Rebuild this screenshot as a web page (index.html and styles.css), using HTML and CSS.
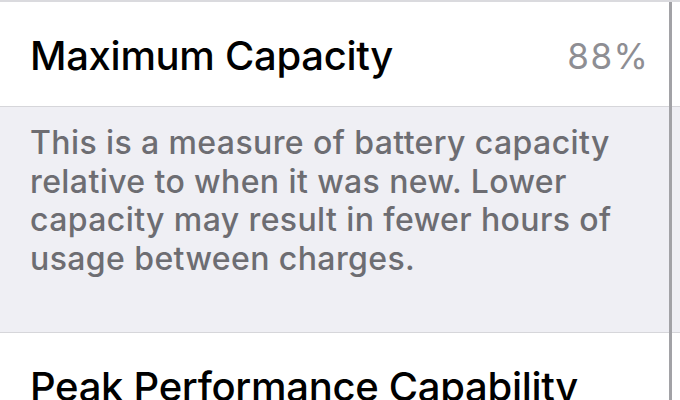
FILE: index.html
```html
<!DOCTYPE html>
<html lang="en">
<head>
    <meta charset="UTF-8" />
    <meta name="viewport" content="width=device-width, initial-scale=1.0"/>
    <title>Battery Health</title>
    <link rel="stylesheet" href="styles.css">
</head>
<body>
    <div class="screen">
        <div class="group">
            <div class="row">
                <span class="label">Maximum Capacity</span>
                <span class="value">88%</span>
            </div>
        </div>
        <p class="footnote">This is a measure of battery capacity relative to when it was new. Lower capacity may result in fewer hours of usage between charges.</p>
        <div class="group">
            <div class="row">
                <span class="label">Peak Performance Capability</span>
            </div>
        </div>
        <!-- edge of the scroll area -->
        <div class="edge"></div>
    </div>
</body>
</html>
```

FILE: styles.css
```css
body {
    margin: 0;
    padding: 0;
    font-family: Inter, "Noto Sans", sans-serif;
    background-color: #ffffff;
    overflow: hidden;
}
.screen {
    position: relative;
    height: 400px;
    border-top: 2px solid #dadade;
    overflow: hidden;
}
.group {
    background: #ffffff;
    border-bottom: 1px solid #d6d6da;
}
.row {
    display: flex;
    justify-content: space-between;
    align-items: center;
    padding: 34px 32px 30px 30px;
}
.label {
    font-size: 40px;
    line-height: 40px;
    font-weight: 500;
    color: #000000;
    letter-spacing: -0.3px;
}
.value {
    font-size: 35px;
    line-height: 40px;
    color: #8e8e93;
    letter-spacing: 1.5px;
    margin-right: -1.5px;
}
.footnote {
    margin: 0;
    background: #efeff4;
    color: #6d6d72;
    font-size: 32px;
    font-weight: 500;
    letter-spacing: 0.4px;
    line-height: 38.5px;
    padding: 17px 40px 54px 30px;
    border-bottom: 1px solid #d6d6da;
}
.edge {
    position: absolute;
    top: 0;
    bottom: 0;
    left: 669px;
    width: 3px;
    background: #a2a2a6;
}
```
